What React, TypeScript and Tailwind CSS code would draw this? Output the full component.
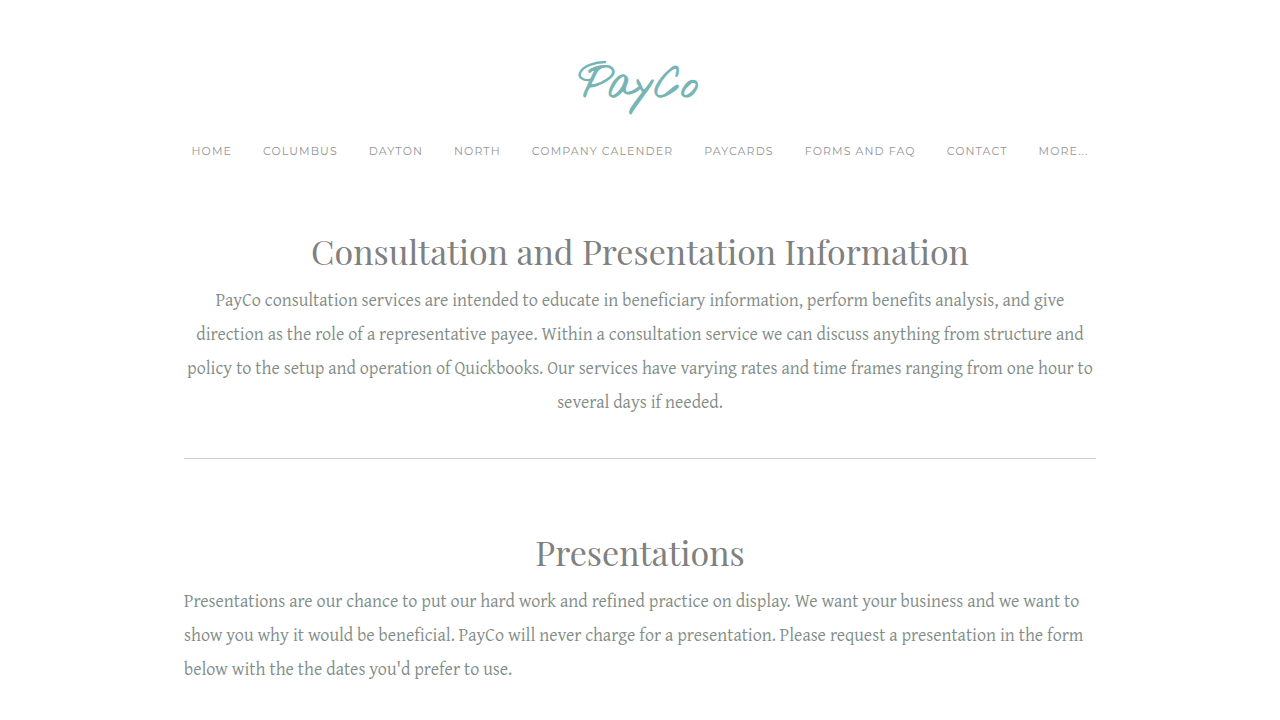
const navLinks = [
  "Home",
  "Columbus",
  "Dayton",
  "North",
  "Company Calender",
  "Paycards",
  "Forms and FAQ",
  "Contact",
  "More...",
];

function Header() {
  return (
    <header className="flex flex-col items-center pt-12">
      <a href="#home" aria-label="PayCo home">
        <svg viewBox="0 0 132 68" className="h-17 w-33" fill="none" stroke="#76b5b5">
          <path
            d="M19 31C11 34 4 30 6 25C9 18 21 14 31 14"
            strokeWidth="2.4"
            strokeLinecap="round"
          />
          <text
            x="9"
            y="49"
            fill="#76b5b5"
            strokeWidth="1.2"
            strokeLinejoin="round"
            fontSize="42"
            fontFamily="'Nothing You Could Do', 'Alex Brush', Lato, cursive"
          >
            PayCo
          </text>
        </svg>
      </a>
      <nav className="mt-[19px] flex flex-wrap justify-center gap-x-px font-['Montserrat','Inter',sans-serif]">
        {navLinks.map((label) => (
          <a
            key={label}
            href="#nav"
            className="px-[15px] py-2 text-[11px] leading-4 tracking-widest text-[#949494] uppercase"
          >
            {label}
          </a>
        ))}
      </nav>
    </header>
  );
}

export default function App() {
  return (
    <div className="min-h-screen bg-white">
      <Header />
      <main className="mx-auto max-w-[912px] font-['Gentium_Plus','Liberation_Serif',serif] text-[18px] leading-[34px] text-[#7f8c87]">
        <section className="pt-[60px] text-center">
          <h1 className="font-['Playfair_Display','Liberation_Serif',serif] text-[34px] leading-12 text-[#808080]">
            Consultation and Presentation Information
          </h1>
          <p className="mt-2">
            PayCo consultation services are intended to educate in beneficiary information, perform
            benefits analysis, and give direction as the role of a representative payee. Within a
            consultation service we can discuss anything from structure and policy to the setup and
            operation of Quickbooks. Our services have varying rates and time frames ranging from
            one hour to several days if needed.
          </p>
        </section>
        <hr className="mt-[39px] border-[#cccccc]" />
        <section className="pt-[69px]">
          <h2 className="text-center font-['Playfair_Display','Liberation_Serif',serif] text-[34px] leading-12 text-[#808080]">
            Presentations
          </h2>
          <p className="mt-2">
            Presentations are our chance to put our hard work and refined practice on display. We
            want your business and we want to show you why it would be beneficial. PayCo will never
            charge for a presentation. Please request a presentation in the form below with the the
            dates you'd prefer to use.
          </p>
        </section>
      </main>
    </div>
  );
}
